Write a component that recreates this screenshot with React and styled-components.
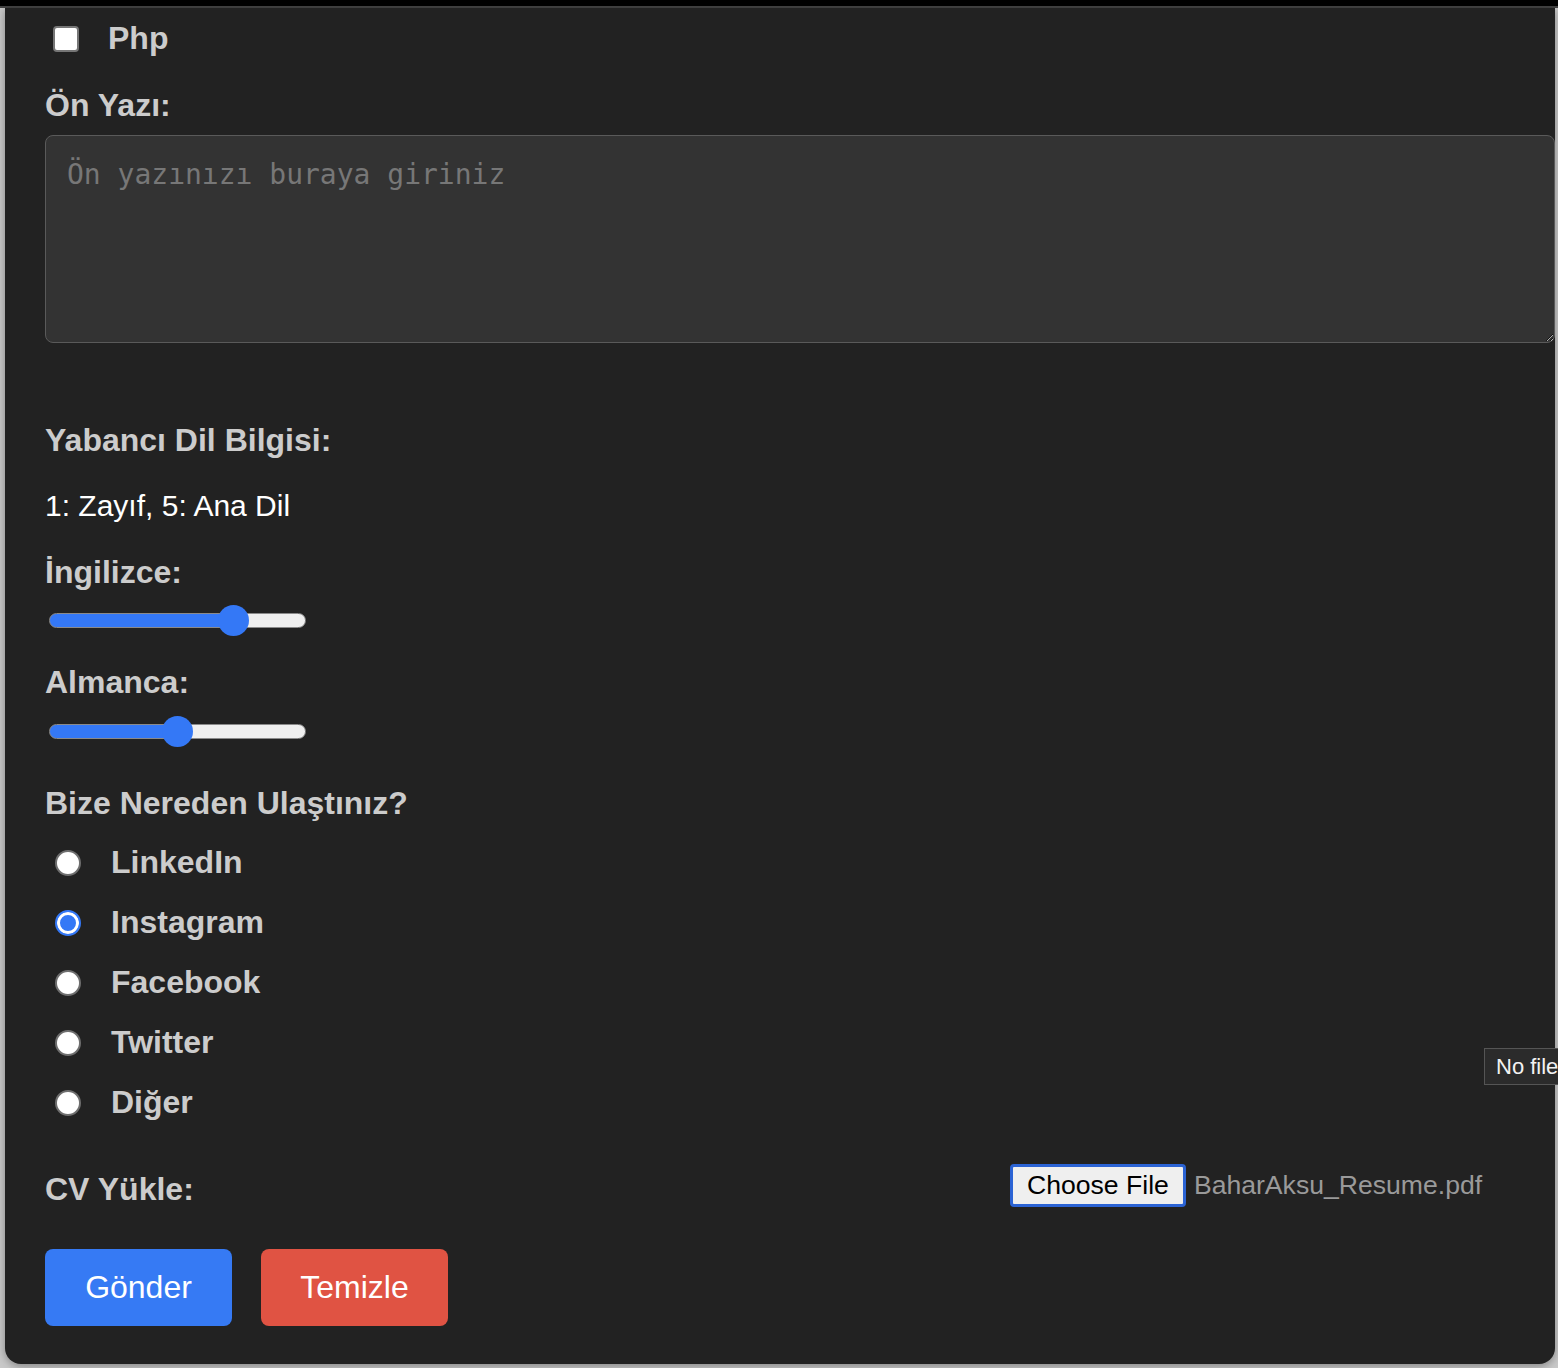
import React from 'react';
import styled, { createGlobalStyle } from 'styled-components';

const GlobalStyle = createGlobalStyle`
  html, body {
    margin: 0;
    padding: 0;
    overflow: hidden;
    background: #c9c9c9;
    font-family: "Liberation Sans", Arial, sans-serif;
  }
`;

const TopBar = styled.div`
  height: 6px;
  background: #000;
  border-bottom: 2px solid #444;
`;

const Page = styled.div`
  padding: 0 3px 4px 5px;
`;

const Card = styled.form`
  position: relative;
  display: flex;
  flex-direction: column;
  align-items: flex-start;
  background: #222;
  padding: 12px 0 38px 40px;
  border-radius: 0 0 16px 16px;
  box-shadow: 0 2px 8px rgba(0, 0, 0, 0.35);
`;

const Label = styled.label`
  display: block;
  margin-top: ${p => p.$mt || 0}px;
  font-size: 32px;
  line-height: 37px;
  font-weight: bold;
  color: #cccccc;
`;

const Hint = styled.p`
  margin: ${p => p.$mt || 0}px 0 0;
  font-size: 30px;
  line-height: 34px;
  color: #fff;
`;

const CheckRow = styled.div`
  display: flex;
  align-items: center;
  height: 37px;
  margin-top: ${p => p.$mt || 0}px;
`;

const Checkbox = styled.input.attrs({ type: 'checkbox' })`
  appearance: none;
  width: 26px;
  height: 26px;
  margin: 0 29px 0 8px;
  background: #fff;
  border: 2px solid #767676;
  border-radius: 4px;
  box-sizing: border-box;
`;

const OptionText = styled.span`
  font-size: 32px;
  line-height: 37px;
  font-weight: bold;
  color: #cccccc;
`;

const TextArea = styled.textarea`
  box-sizing: border-box;
  width: 100%;
  height: 208px;
  margin-top: ${p => p.$mt || 0}px;
  padding: 22px 21px;
  background: #333;
  border: 1px solid #5a5a5a;
  border-radius: 8px;
  color: #ddd;
  font-family: "DejaVu Sans Mono", monospace;
  font-size: 28px;
  &::placeholder {
    color: #777;
  }
`;

const THUMB = 31;
const TRACK_W = 257;

const Range = styled.input.attrs({ type: 'range', min: 1, max: 5, step: 1 })`
  appearance: none;
  -webkit-appearance: none;
  width: ${TRACK_W}px;
  height: ${THUMB}px;
  margin: ${p => p.$mt || 0}px 0 0 4px;
  padding: 0;
  background: transparent;
  &::-webkit-slider-runnable-track {
    height: 15px;
    box-sizing: border-box;
    border: 1px solid #8a8a8a;
    border-radius: 8px;
    background: linear-gradient(
      to right,
      #3478f6 0,
      #3478f6 ${p => p.$fill}%,
      #efefef ${p => p.$fill}%,
      #efefef 100%
    );
  }
  &::-webkit-slider-thumb {
    -webkit-appearance: none;
    width: ${THUMB}px;
    height: ${THUMB}px;
    margin-top: -9px;
    border: none;
    border-radius: 50%;
    background: #3478f6;
  }
`;

const Slider = ({ value, mt }) => {
  const ratio = (value - 1) / 4;
  const fill = ((THUMB / 2 + ratio * (TRACK_W - THUMB)) / TRACK_W) * 100;
  return <Range $mt={mt} $fill={fill.toFixed(2)} defaultValue={value} />;
};

const RadioRow = styled.label`
  display: flex;
  align-items: center;
  height: 37px;
  margin-top: ${p => p.$mt || 0}px;
`;

const Radio = styled.input.attrs({ type: 'radio', name: 'source' })`
  appearance: none;
  width: 26px;
  height: 26px;
  margin: 0 30px 0 10px;
  box-sizing: border-box;
  border: 2px solid #6e6e6e;
  border-radius: 50%;
  background: #fff;
  &:checked {
    border-color: #3478f6;
    background: #3478f6;
    box-shadow: inset 0 0 0 3px #fff;
  }
`;

const FileRow = styled.div`
  display: flex;
  align-items: center;
  width: 100%;
  height: 43px;
  margin-top: ${p => p.$mt || 0}px;
`;

const FileField = styled.div`
  display: flex;
  align-items: center;
  margin-left: auto;
  width: 545px;
`;

const FileButton = styled.button`
  box-sizing: border-box;
  height: 43px;
  padding: 0 14px;
  background: #efefef;
  border: 3px solid #2b63d4;
  border-radius: 4px;
  color: #000;
  font-family: "Liberation Sans", Arial, sans-serif;
  font-size: 26.6px;
`;

const FileName = styled.span`
  margin-left: 8px;
  font-size: 26.6px;
  color: #9a9a9a;
`;

const Tooltip = styled.div`
  position: absolute;
  top: 1040px;
  left: 1479px;
  height: 37px;
  box-sizing: border-box;
  padding: 0 11px;
  display: flex;
  align-items: center;
  white-space: nowrap;
  background: #2b2b2b;
  border: 1px solid #555;
  border-right: none;
  color: #f2f2f2;
  font-size: 22px;
`;

const ButtonRow = styled.div`
  display: flex;
  gap: 29px;
  margin-top: ${p => p.$mt || 0}px;
`;

const ActionButton = styled.button`
  width: 187px;
  height: 77px;
  border: none;
  border-radius: 8px;
  background: ${p => p.$color};
  color: #fff;
  font-family: "Liberation Sans", Arial, sans-serif;
  font-size: 32px;
`;

const sources = ['LinkedIn', 'Instagram', 'Facebook', 'Twitter', 'Diğer'];

const App = () => (
  <>
    <GlobalStyle />
    <TopBar />
    <Page>
      <Card onSubmit={e => e.preventDefault()}>
        <CheckRow>
          <Checkbox />
          <OptionText>Php</OptionText>
        </CheckRow>

        <Label $mt={30}>Ön Yazı:</Label>
        <TextArea $mt={11} placeholder="Ön yazınızı buraya giriniz" />

        <Label $mt={79}>Yabancı Dil Bilgisi:</Label>
        <Hint $mt={30}>1: Zayıf, 5: Ana Dil</Hint>

        <Label $mt={31}>İngilizce:</Label>
        <Slider value={4} mt={14} />

        <Label $mt={28}>Almanca:</Label>
        <Slider value={3} mt={15} />

        <Label $mt={38}>Bize Nereden Ulaştınız?</Label>
        {sources.map((s, i) => (
          <RadioRow key={s} $mt={i === 0 ? 22 : 23}>
            <Radio defaultChecked={s === 'Instagram'} />
            <OptionText>{s}</OptionText>
          </RadioRow>
        ))}

        <FileRow $mt={43}>
          <Label $mt={8}>CV Yükle:</Label>
          <FileField>
            <FileButton type="button">Choose File</FileButton>
            <FileName>BaharAksu_Resume.pdf</FileName>
          </FileField>
        </FileRow>

        <ButtonRow $mt={42}>
          <ActionButton type="submit" $color="#367af4">Gönder</ActionButton>
          <ActionButton type="reset" $color="#e05343">Temizle</ActionButton>
        </ButtonRow>

        <Tooltip>No file chosen</Tooltip>
      </Card>
    </Page>
  </>
);

export default App;
